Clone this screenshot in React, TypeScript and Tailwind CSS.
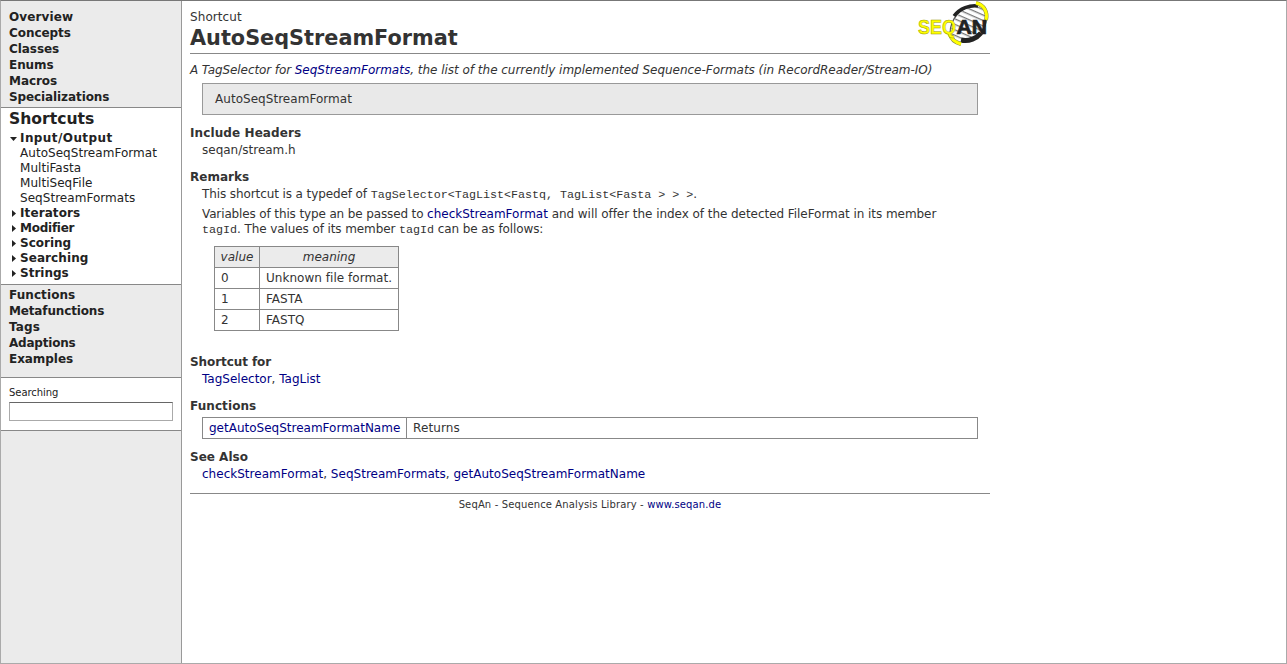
import type { ReactNode } from 'react';

const link = 'text-[#000084]';

function Logo() {
  return (
    <svg width="76" height="50" viewBox="0 0 76 50" aria-label="SeqAn">
      <defs>
        <pattern id="rungs" width="5" height="5" patternUnits="userSpaceOnUse" patternTransform="rotate(24)">
          <rect width="5" height="5" fill="#fff" />
          <rect width="5" height="1.3" fill="#777" />
        </pattern>
      </defs>
      <path d="M37 35 C36 20 46 8 64 6 C72 8 73 20 70 29 C64 38 56 41 46 42Z" fill="url(#rungs)" />
      <path d="M36 34 C36 18 47 8 59 6" fill="none" stroke="#555" strokeWidth="1.2" />
      <path d="M40 16 C46 8 56 5 64 6" fill="none" stroke="#222" strokeWidth="3.4" />
      <path d="M47 40 C55 42 63 38 67 33" fill="none" stroke="#222" strokeWidth="5" />
      <path d="M67 33 C71 28 72 23 72 18" fill="none" stroke="#222" strokeWidth="1.8" />
      <path d="M62 3 C70 5 74 12 72 20" fill="none" stroke="#888844" strokeWidth="4" />
      <path d="M62 3 C70 5 74 12 72 20" fill="none" stroke="#ffff00" strokeWidth="3" />
      <path d="M36 34 C37 39 40 42 47 44" fill="none" stroke="#888844" strokeWidth="4" />
      <path d="M36 34 C37 39 40 42 47 44" fill="none" stroke="#ffff00" strokeWidth="3" />
      <text x="4" y="34" textLength="38" lengthAdjust="spacingAndGlyphs" fill="#ffff00" stroke="#999900" strokeWidth="0.5" className="font-['Liberation_Sans'] text-[20px] font-bold">SEQ</text>
      <text x="42.5" y="34" textLength="30.5" lengthAdjust="spacingAndGlyphs" fill="#222" stroke="#222" strokeWidth="0.7" className="font-['Liberation_Sans'] text-[20px] font-bold">AN</text>
    </svg>
  );
}

function NavItem({ children, className = '' }: { children: ReactNode; className?: string }) {
  return <a className={`block h-4 text-[12px] leading-4 font-bold ${className || 'tracking-[-0.06px]'}`}>{children}</a>;
}

function TreeGroup({ label, open = false, className = '' }: { label: string; open?: boolean; className?: string }) {
  return (
    <div className="flex h-[15px] items-center">
      <svg width="11" height="11" viewBox="0 0 11 11" fill="#222">
        {open ? <path d="M1 4h7L4.5 8z" /> : <path d="M3 2v7l4-3.5z" />}
      </svg>
      <span className={`text-[12px] leading-[15px] font-bold ${className}`}>{label}</span>
    </div>
  );
}

function Leaf({ children }: { children: ReactNode }) {
  return <a className="block h-[15px] pl-[11px] text-[12px] leading-[15px] tracking-[0.04px]">{children}</a>;
}

function Heading({ children, className = '' }: { children: ReactNode; className?: string }) {
  return <h2 className={`h-4 text-[12px] leading-4 font-bold ${className}`}>{children}</h2>;
}

function Code({ children }: { children: ReactNode }) {
  return <code className="font-['Liberation_Mono',monospace] text-[11.7px] leading-none tracking-normal">{children}</code>;
}

const rows = [
  ['0', 'Unknown file format.'],
  ['1', 'FASTA'],
  ['2', 'FASTQ'],
];

export default function App() {
  return (
    <div className="flex h-[664px] w-[1287px] overflow-hidden border border-[#aaaaaa] border-t-[#777777] bg-white font-['DejaVu_Sans',sans-serif] text-[12px] leading-[15px] text-[#333333]">
      <nav className="flex w-[181px] shrink-0 flex-col border-r border-[#999999] bg-[#ebebeb] text-[#222222]">
        <div className="h-[106px] pt-2 pl-2">
          <NavItem className="tracking-[0.12px]">Overview</NavItem>
          <NavItem>Concepts</NavItem>
          <NavItem>Classes</NavItem>
          <NavItem>Enums</NavItem>
          <NavItem>Macros</NavItem>
          <NavItem className="tracking-[-0.1px]">Specializations</NavItem>
        </div>
        <div className="h-[178px] border-y border-[#888888] bg-white pt-0.5 pl-2">
          <div className="h-[21px] text-[15.6px] leading-[19px] font-bold">Shortcuts</div>
          <TreeGroup label="Input/Output" open className="tracking-[0.42px]" />
          <Leaf>AutoSeqStreamFormat</Leaf>
          <Leaf>MultiFasta</Leaf>
          <Leaf>MultiSeqFile</Leaf>
          <Leaf>SeqStreamFormats</Leaf>
          <TreeGroup label="Iterators" className="tracking-[0.1px]" />
          <TreeGroup label="Modifier" className="tracking-[-0.25px]" />
          <TreeGroup label="Scoring" />
          <TreeGroup label="Searching" className="tracking-[0.08px]" />
          <TreeGroup label="Strings" />
        </div>
        <div className="h-[92px] pt-0.5 pl-2">
          <NavItem className="tracking-[0.08px]">Functions</NavItem>
          <NavItem className="tracking-[-0.15px]">Metafunctions</NavItem>
          <NavItem className="tracking-[0.1px]">Tags</NavItem>
          <NavItem className="tracking-[-0.2px]">Adaptions</NavItem>
          <NavItem>Examples</NavItem>
        </div>
        <div className="h-[54px] border-y border-[#888888] bg-white px-2 pt-2">
          <label className="block h-4 text-[10px] leading-[13px] tracking-[-0.05px]">Searching</label>
          <input className="block h-[19px] w-[164px] border border-[#aaaaaa] border-t-[#666666] bg-white outline-none" />
        </div>
      </nav>

      <main className="ml-2 w-[800px]">
        <header className="flex h-[53px] justify-between border-b border-[#888888]">
          <div className="pt-2">
            <div className="h-[17px] leading-4 tracking-[0.08px]">Shortcut</div>
            <h1 className="h-6 text-[20.8px] leading-6 font-bold">AutoSeqStreamFormat</h1>
          </div>
          <div className="-mt-px"><Logo /></div>
        </header>

        <p className="mt-[9px] h-[15px] whitespace-nowrap italic"><span className="tracking-[-0.1px]">A TagSelector for </span><a className={link}>SeqStreamFormats</a><span className="tracking-[-0.02px]">, the list of the currently implemented Sequence-Formats (in RecordReader/Stream-IO)</span></p>

        <div className="mt-[5px] ml-3 h-8 w-[776px] border border-[#999999] bg-[#e9e9e9] pl-3 leading-[30px] tracking-[0.04px]">AutoSeqStreamFormat</div>

        <Heading className="mt-2.5 tracking-[0.1px]">Include Headers</Heading>
        <p className="mt-0.5 ml-3">seqan/stream.h</p>

        <Heading className="mt-[11px]">Remarks</Heading>
        <div className="ml-3 whitespace-nowrap">
          <p className="mt-0.5 h-[15px]"><span className="tracking-[-0.1px]">This shortcut is a typedef of </span><Code>{'TagSelector<TagList<Fastq, TagList<Fasta > > >'}</Code>.</p>
          <p className="mt-[5px] h-[15px]"><span className="tracking-[-0.13px]">Variables of this type an be passed to </span><a className={link}>checkStreamFormat</a><span className="tracking-[-0.05px]"> and will offer the index of the detected FileFormat in its member</span></p>
          <p className="h-[15px] tracking-[-0.1px]"><Code>tagId</Code>. The values of its member <Code>tagId</Code> can be as follows:</p>
          <table className="mt-[9px] ml-3 h-[85px] w-[185px] table-fixed border-collapse">
            <thead>
              <tr className="h-[21px] bg-[#ebebeb] italic">
                <th className="w-[45px] border border-[#888888] p-0 font-normal">value</th>
                <th className="border border-[#888888] p-0 font-normal">meaning</th>
              </tr>
            </thead>
            <tbody>
              {rows.map(([value, meaning]) => (
                <tr key={value} className="h-[21px]">
                  <td className="border border-[#888888] p-0 pl-1.5">{value}</td>
                  <td className="border border-[#888888] p-0 pl-1.5 tracking-[0.03px]">{meaning}</td>
                </tr>
              ))}
            </tbody>
          </table>
        </div>

        <Heading className="mt-[23px] tracking-[-0.08px]">Shortcut for</Heading>
        <p className="mt-0.5 ml-3"><a className={link}>TagSelector</a>, <a className={link}>TagList</a></p>

        <Heading className="mt-[11px] tracking-[0.08px]">Functions</Heading>
        <div className="mt-[3px] ml-3 flex h-[22px] w-[776px] border border-[#888888] leading-5">
          <div className="w-[204px] border-r border-[#888888] pl-1.5"><a className={link}>getAutoSeqStreamFormatName</a></div>
          <div className="pl-1.5 tracking-[0.12px]">Returns</div>
        </div>

        <Heading className="mt-2.5">See Also</Heading>
        <p className="mt-0.5 ml-3 tracking-[0.02px]"><a className={link}>checkStreamFormat</a>, <a className={link}>SeqStreamFormats</a>, <a className={link}>getAutoSeqStreamFormatName</a></p>

        <footer className="mt-[11px] border-t border-[#888888] pt-1 text-center text-[10px] leading-[14px]"><span className="tracking-[0.13px]">SeqAn - Sequence Analysis Library - <a className={link}>www.seqan.de</a></span></footer>
      </main>
    </div>
  );
}
